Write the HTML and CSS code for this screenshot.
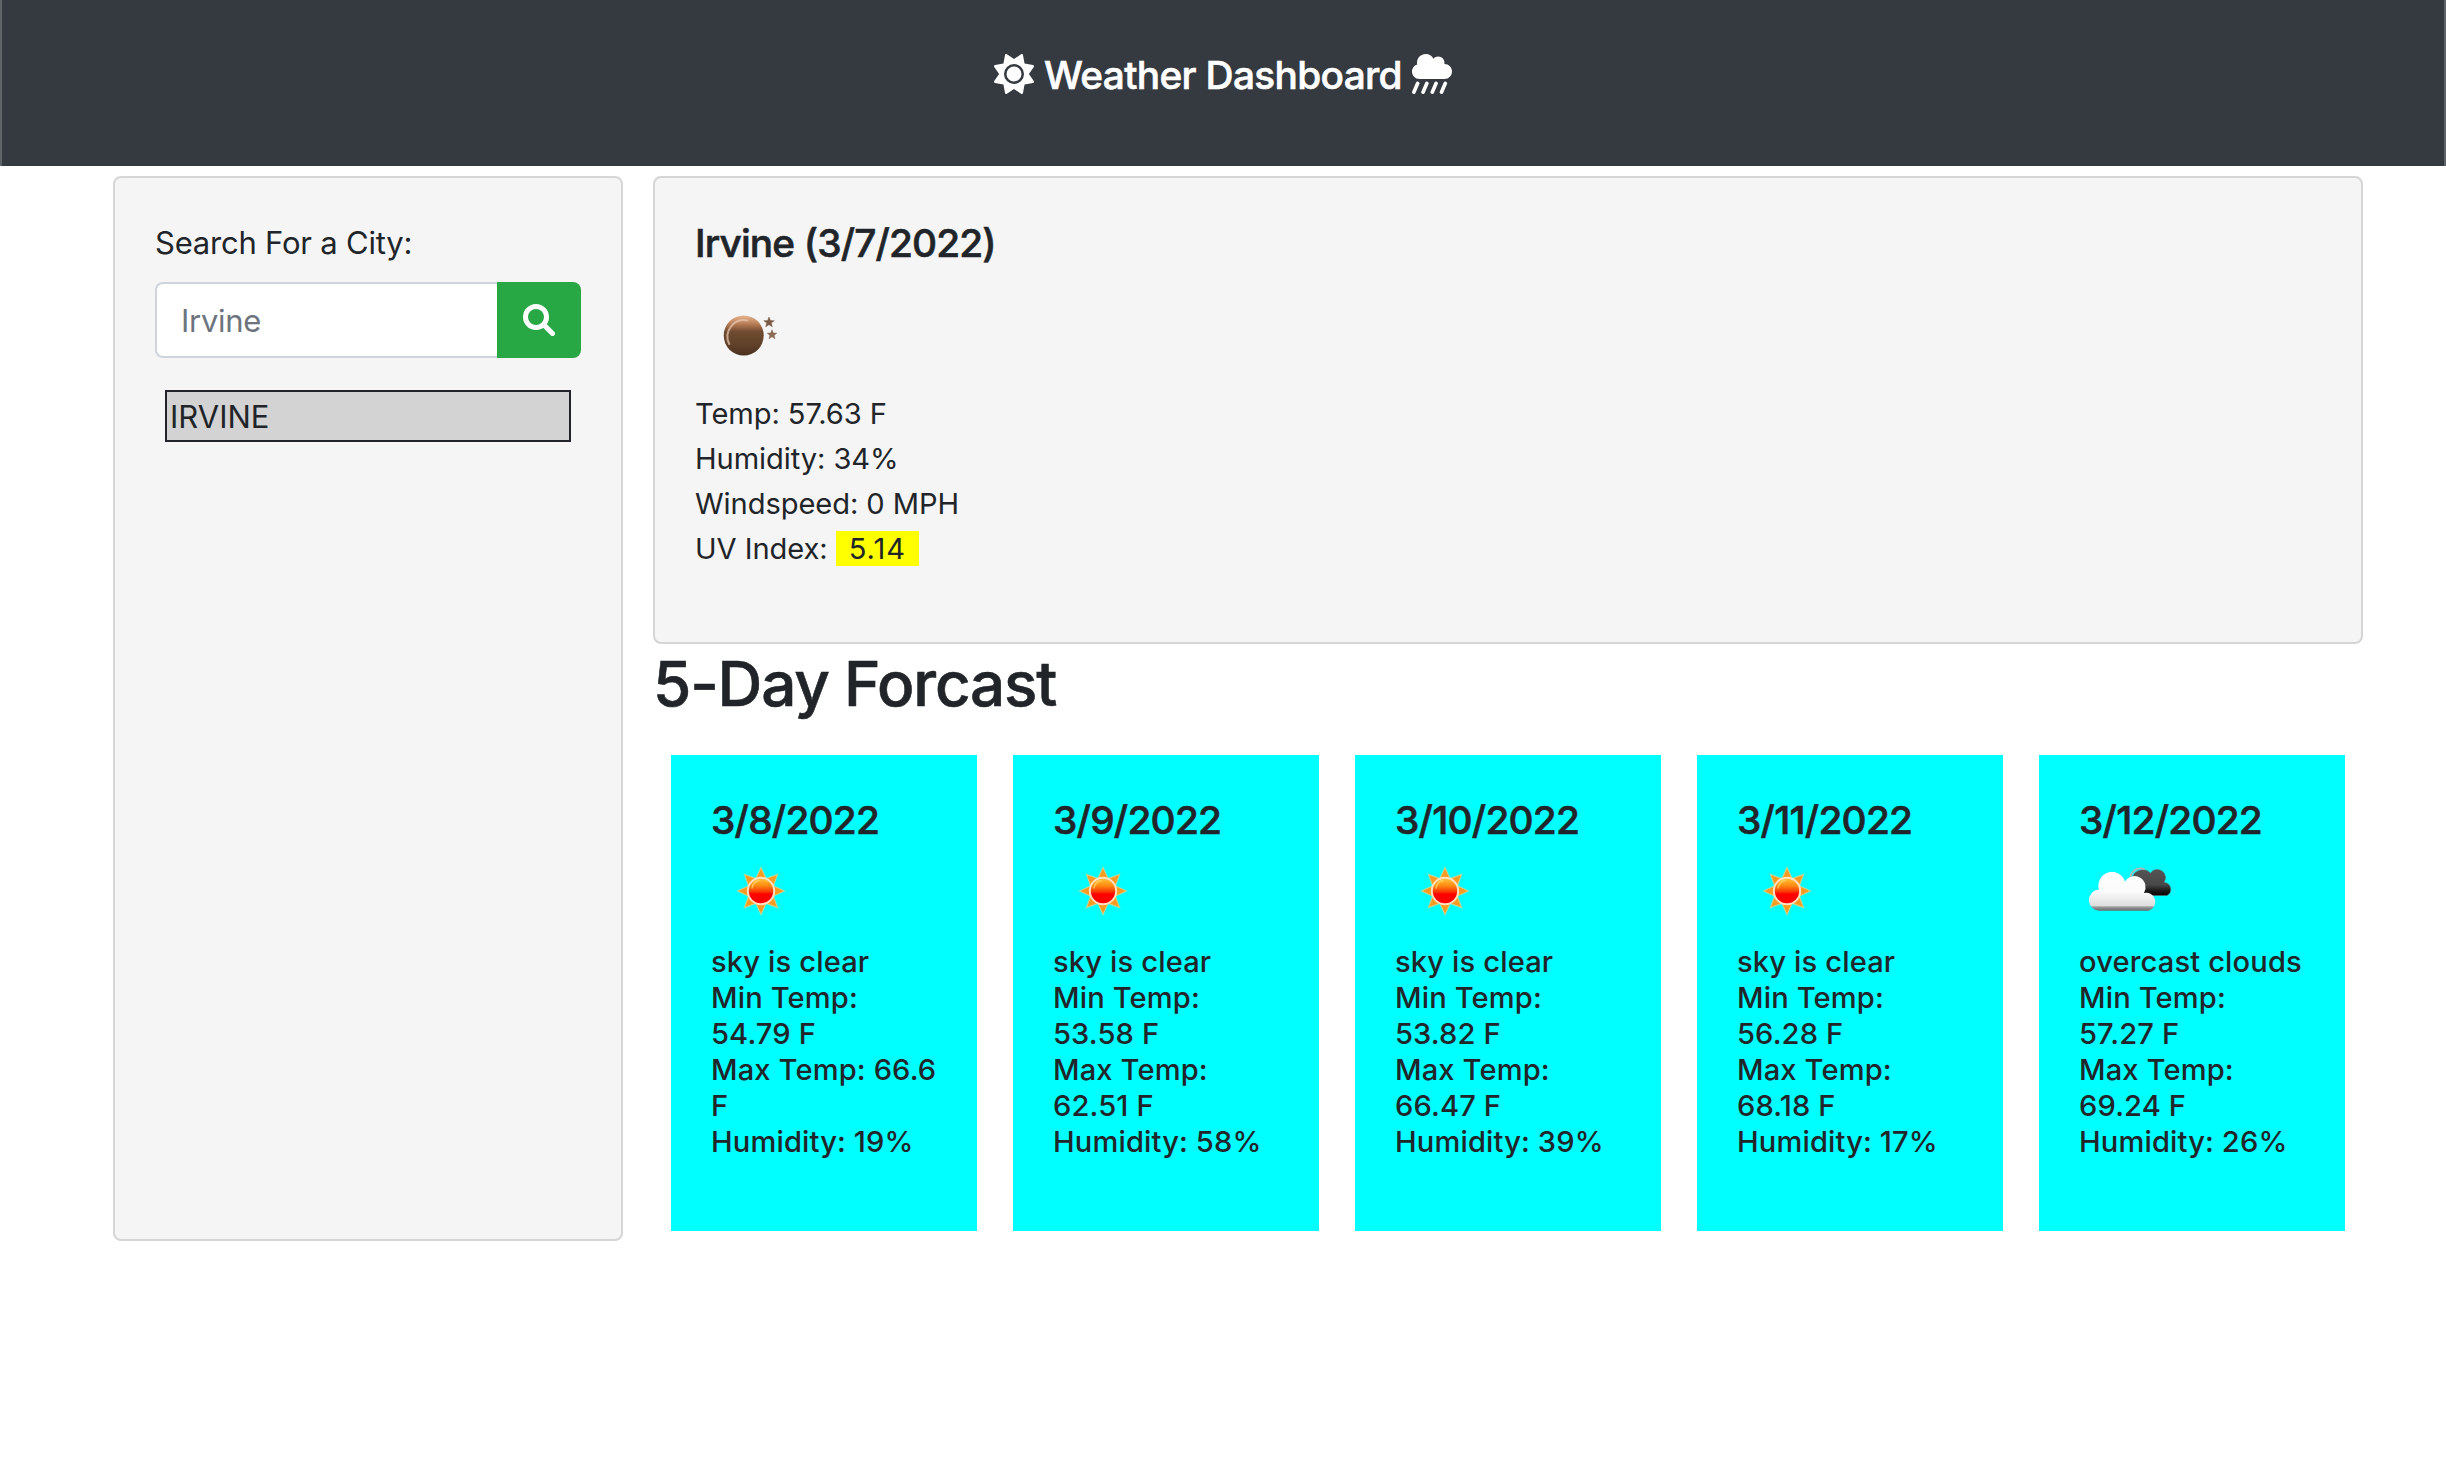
FILE: index.html
```
<!DOCTYPE html>
<html lang="en">
<head>
<meta charset="utf-8">
<title>Weather Dashboard</title>
<link rel="stylesheet" href="styles.css">
</head>
<body>
<svg class="sprite" aria-hidden="true">
  <defs>
    <linearGradient id="sunFill" x1="0" y1="0" x2="0" y2="1">
      <stop offset="0" stop-color="#ffc83c"/><stop offset=".3" stop-color="#ff8a12"/><stop offset=".52" stop-color="#f93a06"/><stop offset=".62" stop-color="#fe0000"/><stop offset="1" stop-color="#fe0000"/>
    </linearGradient>
    <linearGradient id="whiteCloud" gradientUnits="userSpaceOnUse" x1="0" y1="29" x2="0" y2="68">
      <stop offset="0" stop-color="#fff"/><stop offset=".5" stop-color="#fbfbfb"/><stop offset=".86" stop-color="#dedede"/><stop offset=".9" stop-color="#999"/><stop offset="1" stop-color="#666"/>
    </linearGradient>
    <linearGradient id="darkCloud" gradientUnits="userSpaceOnUse" x1="0" y1="25" x2="0" y2="53">
      <stop offset="0" stop-color="#555"/><stop offset=".6" stop-color="#484848"/><stop offset=".8" stop-color="#1c1c1c"/><stop offset="1" stop-color="#000"/>
    </linearGradient>
    <linearGradient id="moonFill" x1="0" y1="0" x2="0" y2="1">
      <stop offset="0" stop-color="#e8b68e"/><stop offset=".22" stop-color="#b47a54"/><stop offset=".4" stop-color="#704b31"/><stop offset=".75" stop-color="#5f4029"/><stop offset="1" stop-color="#4a3020"/>
    </linearGradient>
  </defs>
  <symbol id="clear" viewBox="0 0 100 100">
    <g fill="#fb9a20" stroke="#e0d48c" stroke-width="1.200" stroke-opacity=".7">
      <path d="M50 24.500l6 13h-12z"/>
      <path d="M50 24.500l6 13h-12z" transform="rotate(45 50 48)"/>
      <path d="M50 24.500l6 13h-12z" transform="rotate(90 50 48)"/>
      <path d="M50 24.500l6 13h-12z" transform="rotate(135 50 48)"/>
      <path d="M50 24.500l6 13h-12z" transform="rotate(180 50 48)"/>
      <path d="M50 24.500l6 13h-12z" transform="rotate(225 50 48)"/>
      <path d="M50 24.500l6 13h-12z" transform="rotate(270 50 48)"/>
      <path d="M50 24.500l6 13h-12z" transform="rotate(315 50 48)"/>
    </g>
    <circle cx="50" cy="48" r="13.200" fill="url(#sunFill)" stroke="#ffe3c2" stroke-width="2"/>
    <path d="M41 45a9.500 9.500 0 0 1 7-7.500" fill="none" stroke="#ffe070" stroke-width="1.400" stroke-linecap="round" opacity=".7"/>
  </symbol>
  <symbol id="overcast" viewBox="0 0 100 100">
    <path d="M53 52.500V37A10.800 10.800 0 0 1 71.500 30A8.200 8.200 0 0 1 85 39.500A6.900 6.900 0 0 1 88 52.500z" fill="url(#darkCloud)" stroke="#666" stroke-width=".6"/>
    <path d="M51.500 36A10 10 0 0 1 65 26" fill="none" stroke="#b5b5b5" stroke-width="1.800" stroke-linecap="round"/>
    <path d="M21 67.700A10.300 10.300 0 0 1 20 46.500A13.600 13.600 0 0 1 46 38.500A10.500 10.500 0 0 1 65 50A9 9 0 0 1 69.500 67.700z" fill="url(#whiteCloud)"/>
  </symbol>
  <symbol id="night" viewBox="0 0 100 100">
    <circle cx="48.700" cy="49.500" r="20" fill="url(#moonFill)"/>
    <path d="M34.200 58A16.500 16.500 0 0 1 52.200 34.500" fill="none" stroke="#e6c6ac" stroke-width="2" stroke-linecap="round" opacity=".75"/>
    <g fill="#7c5a44" stroke="#7c5a44" stroke-width=".8" stroke-opacity=".6">
      <path d="M74 31l1.400 3.500 3.800.2-2.900 2.400 1 3.700-3.300-2.100-3.300 2.100 1-3.700-2.900-2.400 3.800-.2z"/>
      <path d="M77 43.800l1.300 3.200 3.400.2-2.600 2.200.9 3.300-3-1.900-3 1.900.9-3.300-2.600-2.200 3.400-.2z" fill="#8d6b55"/>
    </g>
  </symbol>
</svg>

<header class="header">
  <svg class="header-icon" viewBox="0 0 512 512"><path d="M361.500 1.200c5 2.100 8.600 6.600 9.600 11.900L391 121l107.900 19.800c5.300 1 9.800 4.600 11.900 9.600s1.500 10.700-1.600 15.200L446.900 256l62.300 90.300c3.100 4.500 3.700 10.200 1.600 15.200s-6.600 8.600-11.900 9.600L391 391 371.100 498.900c-1 5.300-4.600 9.800-9.600 11.900s-10.700 1.500-15.200-1.600L256 446.900l-90.300 62.300c-4.500 3.100-10.200 3.700-15.200 1.600s-8.600-6.600-9.600-11.900L121 391 13.100 371.100c-5.300-1-9.800-4.600-11.900-9.600s-1.500-10.700 1.600-15.200L65.100 256 2.800 165.700c-3.100-4.500-3.700-10.200-1.600-15.200s6.600-8.600 11.900-9.600L121 121 140.900 13.100c1-5.300 4.600-9.800 9.600-11.900s10.700-1.500 15.200 1.600L256 65.100 346.300 2.800c4.500-3.100 10.200-3.700 15.200-1.600zM160 256a96 96 0 1 1 192 0 96 96 0 1 1 -192 0zm224 0a128 128 0 1 0 -256 0 128 128 0 1 0 256 0z"/></svg>
  <h1 class="header-title">Weather Dashboard</h1>
  <svg class="header-icon" viewBox="0 0 512 512"><path d="M96 320c-53 0-96-43-96-96c0-42.500 27.600-78.600 65.900-91.200C64.700 126.100 64 119.100 64 112C64 50.100 114.100 0 176 0c43.100 0 80.500 24.300 99.200 60c14.700-17.100 36.500-28 60.800-28c44.200 0 80 35.800 80 80c0 5.500-.6 10.800-1.600 16c.5 0 1.100 0 1.600 0c53 0 96 43 96 96s-43 96-96 96H96z"/><g class="rain"><path d="M72 376L24 488M190 376L142 488M308 376L260 488M426 376L378 488"/></g></svg>
</header>

<main class="layout">
  <aside class="panel search">
    <label class="search-label" for="city">Search For a City:</label>
    <div class="search-row">
      <input class="search-input" id="city" type="text" placeholder="Irvine">
      <button class="search-button" type="button" aria-label="Search">
        <svg class="search-icon" viewBox="0 0 512 512"><circle cx="208" cy="208" r="168"/><path d="M330 330L472 472"/></svg>
      </button>
    </div>
    <div class="history-item">IRVINE</div>
  </aside>

  <section class="content">
    <article class="panel current">
      <h3 class="current-title">Irvine (3/7/2022)</h3>
      <svg class="weather-icon current-icon"><use href="#night"/></svg>
      <p class="reading">Temp: 57.63 F</p>
      <p class="reading">Humidity: 34%</p>
      <p class="reading">Windspeed: 0 MPH</p>
      <p class="reading">UV Index: <span class="uv">5.14</span></p>
    </article>

    <h2 class="forecast-title">5-Day Forcast</h2>
    <div class="forecast">
      <article class="day">
        <h3 class="day-date">3/8/2022</h3>
        <svg class="weather-icon"><use href="#clear"/></svg>
        <p class="day-text">sky is clear<br>Min Temp: 54.79 F<br>Max Temp: 66.6 F<br>Humidity: 19%</p>
      </article>
      <article class="day">
        <h3 class="day-date">3/9/2022</h3>
        <svg class="weather-icon"><use href="#clear"/></svg>
        <p class="day-text">sky is clear<br>Min Temp: 53.58 F<br>Max Temp: 62.51 F<br>Humidity: 58%</p>
      </article>
      <article class="day">
        <h3 class="day-date">3/10/2022</h3>
        <svg class="weather-icon"><use href="#clear"/></svg>
        <p class="day-text">sky is clear<br>Min Temp: 53.82 F<br>Max Temp: 66.47 F<br>Humidity: 39%</p>
      </article>
      <article class="day">
        <h3 class="day-date">3/11/2022</h3>
        <svg class="weather-icon"><use href="#clear"/></svg>
        <p class="day-text">sky is clear<br>Min Temp: 56.28 F<br>Max Temp: 68.18 F<br>Humidity: 17%</p>
      </article>
      <article class="day">
        <h3 class="day-date">3/12/2022</h3>
        <svg class="weather-icon"><use href="#overcast"/></svg>
        <p class="day-text">overcast clouds<br>Min Temp: 57.27 F<br>Max Temp: 69.24 F<br>Humidity: 26%</p>
      </article>
    </div>
  </section>
</main>
</body>
</html>
```
FILE: styles.css
```
* { box-sizing: border-box; }

body {
  margin: 0;
  background: #fff;
  color: #212529;
  font-family: Inter, "Liberation Sans", sans-serif;
  font-size: 31px;
}

h1, h2, h3, p { margin: 0; font-weight: 500; }
h1, h2, h3 { -webkit-text-stroke: .6px currentColor; }

.sprite { display: block; width: 0; height: 0; }

.header {
  display: flex;
  justify-content: center;
  align-items: flex-start;
  gap: 10px;
  height: 166px;
  padding-top: 51px;
  background: #343a40;
  border: solid #5f6468;
  border-width: 0 2px;
  color: #fff;
}
.header-title { font-size: 38.8px; line-height: 48px; letter-spacing: -.67px; }
.header-icon { width: 40px; height: 40px; margin-top: 3px; fill: currentColor; }
.rain { fill: none; stroke: currentColor; stroke-width: 48; stroke-linecap: round; }

.layout {
  display: grid;
  grid-template-columns: 510px 1710px;
  gap: 30px;
  padding: 10px 0 0 113px;
}

.panel {
  padding: 40px;
  background: whitesmoke;
  border: 2px solid #d5d5d5;
  border-radius: 8px;
}

.search-label { display: block; padding-top: 1px; margin-bottom: 15px; line-height: 48px; letter-spacing: -.21px; }
.search-row { display: flex; height: 76px; }
.search-input {
  flex: 1;
  min-width: 0;
  padding: 0 24px;
  background: #fff;
  border: 2px solid #ced4da;
  border-right: 0;
  border-radius: 8px 0 0 8px;
  font: inherit;
  letter-spacing: -.3px;
}
.search-input::placeholder { color: #6c757d; opacity: 1; }
.search-button {
  display: flex;
  align-items: center;
  justify-content: center;
  width: 84px;
  padding: 0;
  background: #28a745;
  border: 0;
  border-radius: 0 8px 8px 0;
}
.search-icon { width: 32px; height: 32px; fill: none; stroke: #fff; stroke-width: 80; stroke-linecap: round; }
.history-item {
  height: 52px;
  margin: 32px 10px 0;
  padding: 1px 3px 0;
  background: lightgray;
  border: 2px solid #212529;
  line-height: 48px;
}

.current { height: 468px; }
.current-title { padding-top: 1px; font-size: 38.8px; line-height: 48px; letter-spacing: -.85px; }
.weather-icon { display: block; width: 100px; height: 100px; }
.current-icon { margin: 19px 0 5px; }
.reading { font-size: 29.1px; line-height: 45px; letter-spacing: -.08px; font-weight: 400; }
.uv { padding: 0 13px; background: yellow; letter-spacing: 1px; }

.forecast-title { margin: 1px 0 33px; font-size: 62px; line-height: 77px; letter-spacing: -1.2px; }
.forecast {
  display: grid;
  grid-template-columns: repeat(5, 306px);
  gap: 36px;
  padding: 0 18px 10px;
}
.day { height: 476px; padding: 40px; background: cyan; }
.day-date { padding-top: 1px; margin-bottom: -1px; font-size: 38.8px; line-height: 48px; letter-spacing: -.75px; }
.day-text { padding-top: 1px; font-size: 29.1px; line-height: 36px; letter-spacing: .14px; }
```
